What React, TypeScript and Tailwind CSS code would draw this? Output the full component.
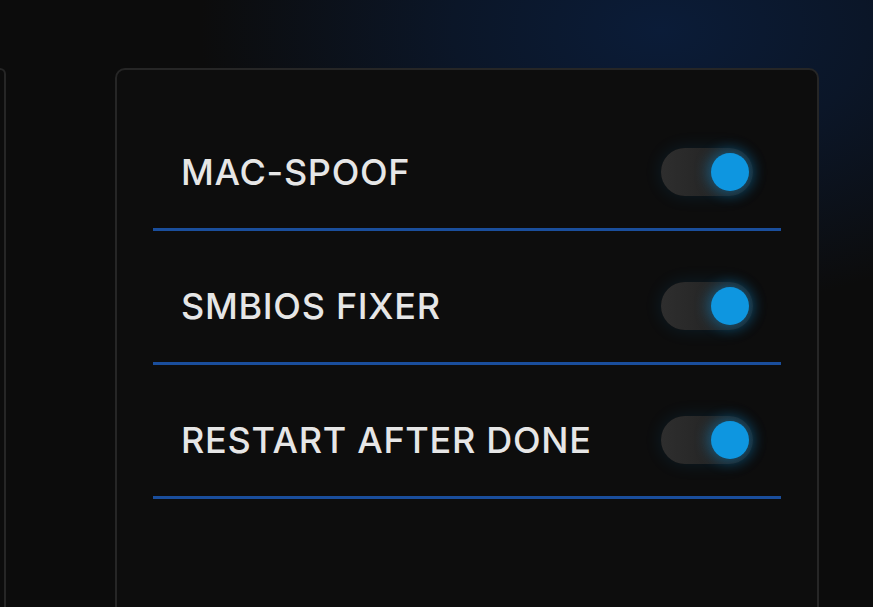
import { useState } from "react";

const options = ["MAC-SPOOF", "SMBIOS FIXER", "RESTART AFTER DONE"];

const Toggle = ({ on, onClick }: { on: boolean; onClick: () => void }) => (
    <button
        onClick={onClick}
        className="relative w-[92px] h-[48px] rounded-full bg-gradient-to-r from-[#2e2e2e] via-[#262626] to-[#1b1f22] shadow-[0_0_18px_rgba(14,150,230,0.12)]"
    >
        <span
            className={`absolute top-[5px] w-[38px] h-[38px] rounded-full transition-all ${on ? "left-[50px] bg-[#0e96e0] shadow-[0_0_14px_3px_rgba(14,150,224,0.45)]" : "left-[5px] bg-[#555]"}`}
        />
    </button>
);

export default function App() {
    const [state, setState] = useState([true, true, true]);

    return (
        <div
            className="w-[873px] h-[607px] overflow-hidden bg-[#0c0c0c] bg-[radial-gradient(ellipse_460px_280px_at_660px_30px,#0b1c38_0%,#0b1628_45%,#0c0c0c_100%)] flex items-start pt-[68px] gap-[109px]"
            style={{ fontFamily: "Inter, 'Noto Sans', sans-serif" }}
        >
            <div className="w-[6px] h-[560px] shrink-0 border-r-2 border-t-2 border-[#262626] rounded-tr-[10px]" />
            <div className="w-[704px] h-[560px] shrink-0 rounded-[10px] border-2 border-[#262626] bg-[#0d0d0d] px-[36px] pt-[78px] flex flex-col gap-[51px]">
                {options.map((label, i) => (
                    <div key={label} className="flex items-center justify-between pl-[28px] pr-[28px] pb-[32px] border-b-[3px] border-[#1a4e9c]">
                        <span className="text-[36px] leading-[48px] font-medium text-[#e6e6e6] tracking-[0.7px]">{label}</span>
                        <Toggle on={state[i]} onClick={() => setState(state.map((s, j) => (j === i ? !s : s)))} />
                    </div>
                ))}
            </div>
        </div>
    );
}
